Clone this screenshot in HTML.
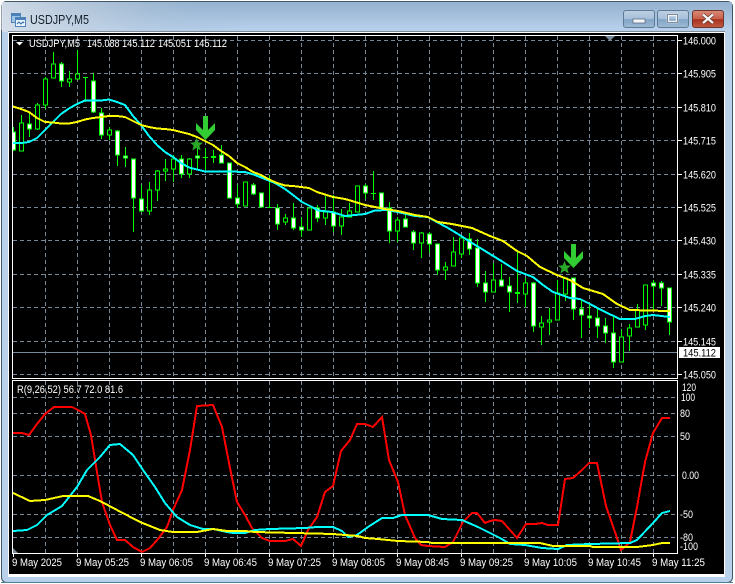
<!DOCTYPE html>
<html><head><meta charset="utf-8"><title>USDJPY,M5</title>
<style>
html,body{margin:0;padding:0;background:#fff;width:735px;height:584px;overflow:hidden}
svg{display:block}
text{font-family:"Liberation Sans",sans-serif;font-size:11px;fill:#fff}
</style></head><body>
<svg width="735" height="584" viewBox="0 0 735 584" xmlns="http://www.w3.org/2000/svg">
<defs>
<linearGradient id="t" x1="0" y1="0" x2="0" y2="1"><stop offset="0" stop-color="#94b1cf"/><stop offset="1" stop-color="#bad2ec"/></linearGradient>
<linearGradient id="g" x1="0" y1="0" x2="1" y2="0"><stop offset="0" stop-color="#dde3ea" stop-opacity=".8"/><stop offset=".14" stop-color="#c3d0de" stop-opacity=".5"/><stop offset=".33" stop-color="#94b1cf" stop-opacity="0"/></linearGradient>
<linearGradient id="b" x1="0" y1="0" x2="0" y2="1"><stop offset="0" stop-color="#bfd1e3"/><stop offset=".5" stop-color="#a5bfd9"/><stop offset=".52" stop-color="#83a5c6"/><stop offset="1" stop-color="#9dbad6"/></linearGradient>
<linearGradient id="c" x1="0" y1="0" x2="0" y2="1"><stop offset="0" stop-color="#d98a78"/><stop offset=".5" stop-color="#c75f4a"/><stop offset=".52" stop-color="#a8321d"/><stop offset="1" stop-color="#c05a42"/></linearGradient>
<clipPath id="mc"><rect x="13" y="36" width="664" height="342"/></clipPath>
<clipPath id="sc"><rect x="13" y="381" width="664" height="172"/></clipPath>
</defs>
<!-- window frame -->
<rect x="1.5" y="1.5" width="731" height="581" rx="5" fill="#b9d1eb" stroke="#3f5666"/>
<rect x="2" y="2" width="730" height="30" fill="url(#t)"/>
<rect x="2" y="2" width="730" height="30" fill="url(#g)"/>
<path d="M2 2V30" stroke="#e8eef4" stroke-width="1"/>
<rect x="8" y="31" width="717" height="1" fill="#7f8c98"/>
<rect x="8" y="32" width="717" height="545" fill="#fff"/>
<rect x="9" y="33" width="715" height="541" fill="#000"/>
<rect x="1" y="582" width="732" height="1" fill="#4f7f93"/>
<!-- title icon -->
<g shape-rendering="crispEdges">
<rect x="11.5" y="13.5" width="9" height="9" fill="#9fc3e6" stroke="#4c82b8"/>
<rect x="15.5" y="17.5" width="10" height="9" fill="#eaf3fb" stroke="#4c82b8"/>
<rect x="12" y="14" width="8" height="2" fill="#4c82b8"/>
<rect x="16" y="18" width="9" height="2" fill="#4c82b8"/>
</g>
<path d="M17 24l2-2 2 2 2-2 1 1" fill="none" stroke="#2f6aa5" stroke-width="1"/>
<text x="30" y="24" style="font-size:13px;fill:#15202a" textLength="59" lengthAdjust="spacingAndGlyphs">USDJPY,M5</text>
<!-- buttons -->
<rect x="623.5" y="10.5" width="31" height="17" rx="2.5" fill="url(#b)" stroke="#5f7a95"/>
<rect x="633" y="19" width="12" height="4" fill="#f4f6f8" stroke="#4f6074" stroke-width=".7"/>
<rect x="657.5" y="10.5" width="31" height="17" rx="2.5" fill="url(#b)" stroke="#5f7a95"/>
<rect x="668" y="15" width="9" height="7" fill="none" stroke="#f2f5f8" stroke-width="2.4"/>
<rect x="667.5" y="14.5" width="10" height="8" fill="none" stroke="#4d5f73" stroke-width=".7"/>
<rect x="692.5" y="10.5" width="31" height="17" rx="2.5" fill="url(#c)" stroke="#6e332a"/>
<path d="M703 14.5l10 8.5M713 14.5l-10 8.5" stroke="#5b3028" stroke-width="3.6"/>
<path d="M703 14.5l10 8.5M713 14.5l-10 8.5" stroke="#f4f4f4" stroke-width="2.4"/>

<!-- grid -->
<g stroke="#778899" stroke-width="1" stroke-dasharray="4 3" fill="none" shape-rendering="crispEdges">
<path d="M13 40.5H677M13 73.5H677M13 107.5H677M13 140.5H677M13 174.5H677M13 207.5H677M13 240.5H677M13 274.5H677M13 307.5H677M13 341.5H677M13 374.5H677"/>
<path d="M45.5 36V378M77.5 36V378M109.5 36V378M141.5 36V378M173.5 36V378M205.5 36V378M237.5 36V378M269.5 36V378M301.5 36V378M333.5 36V378M365.5 36V378M397.5 36V378M429.5 36V378M461.5 36V378M493.5 36V378M525.5 36V378M557.5 36V378M589.5 36V378M621.5 36V378M653.5 36V378"/>
<path d="M13 397.5H677M13 413.5H677M13 436.5H677M13 475.5H677M13 514.5H677M13 537.5H677"/>
<path d="M45.5 381V553M77.5 381V553M109.5 381V553M141.5 381V553M173.5 381V553M205.5 381V553M237.5 381V553M269.5 381V553M301.5 381V553M333.5 381V553M365.5 381V553M397.5 381V553M429.5 381V553M461.5 381V553M493.5 381V553M525.5 381V553M557.5 381V553M589.5 381V553M621.5 381V553M653.5 381V553"/>
</g>
<path d="M13 352.5H677" stroke="#778899" shape-rendering="crispEdges"/>

<!-- candles -->
<g clip-path="url(#mc)" shape-rendering="crispEdges" stroke="#00ff00" stroke-width="1">
<path fill="none" d="M13.5 127V151M21.5 115V151M29.5 112V137M37.5 103V130M45.5 77V109M53.5 52V78M61.5 62V87M69.5 71V87M77.5 50V79M85.5 77V102M93.5 73V113M101.5 108V139M109.5 127V140M117.5 130V166M125.5 147V167M133.5 159V232M141.5 185V212M149.5 182V215M157.5 170V201M165.5 159V181M173.5 155V182M181.5 155V178M189.5 158V178M197.5 145V169M205.5 148V170M213.5 150V163M221.5 145V163M229.5 163V198M237.5 185V208M245.5 182V206M253.5 183V195M261.5 193V207M269.5 175V207M277.5 204V230M285.5 214V225M293.5 203V230M301.5 217V237M309.5 208V230M317.5 205V222M325.5 196V225M333.5 195V232M341.5 209V235M349.5 203V217M357.5 186V212M365.5 184V199M373.5 171V200M381.5 193V208M389.5 202V243M397.5 217V242M405.5 213V227M413.5 230V250M421.5 232V258M429.5 232V253M437.5 244V275M445.5 262V280M453.5 237V266M461.5 237V258M469.5 233V255M477.5 239V287M485.5 271V302M493.5 263V292M501.5 264V287M509.5 277V312M517.5 250V303M525.5 278V307M533.5 282V332M541.5 316V345M549.5 308V335M557.5 280V320M565.5 278V301M573.5 278V320M581.5 300V338M589.5 305V328M597.5 308V338M605.5 318V343M613.5 317V368M621.5 329V362M629.5 324V351M637.5 304V327M645.5 285V330M653.5 280V310M661.5 281V306M669.5 288V335"/>
<path fill="none" d="M83 77.5h5M203 157.5h5M211 157.5h5M211 156.5h5M267 207.5h5M371 193.5h5M515 293.5h5M515 292.5h5"/>
<path fill="#fff" d="M11.5 132h4V150h-4zM27.5 124h4V129h-4zM59.5 64h4V81h-4zM91.5 81h4V112h-4zM99.5 113h4V135h-4zM115.5 131h4V155h-4zM123.5 156h4V158h-4zM131.5 159h4V198h-4zM139.5 199h4V211h-4zM179.5 159h4V174h-4zM195.5 156h4V158h-4zM219.5 155h4V163h-4zM227.5 163h4V198h-4zM235.5 198h4V204h-4zM251.5 185h4V194h-4zM259.5 193h4V207h-4zM275.5 208h4V224h-4zM291.5 218h4V228h-4zM299.5 227h4V230h-4zM315.5 208h4V218h-4zM331.5 212h4V226h-4zM363.5 186h4V193h-4zM379.5 193h4V208h-4zM387.5 208h4V231h-4zM403.5 219h4V227h-4zM411.5 232h4V243h-4zM427.5 234h4V244h-4zM435.5 244h4V270h-4zM467.5 239h4V249h-4zM475.5 248h4V283h-4zM483.5 283h4V292h-4zM499.5 280h4V286h-4zM507.5 286h4V292h-4zM531.5 283h4V326h-4zM571.5 278h4V309h-4zM579.5 309h4V315h-4zM587.5 316h4V318h-4zM595.5 318h4V326h-4zM603.5 326h4V333h-4zM611.5 333h4V362h-4zM651.5 283h4V286h-4zM659.5 283h4V288h-4zM667.5 288h4V322h-4z"/>
<path fill="#000" d="M19.5 123h4V151h-4zM35.5 105h4V129h-4zM43.5 79h4V105h-4zM51.5 64h4V78h-4zM67.5 79h4V82h-4zM75.5 74h4V79h-4zM107.5 130h4V135h-4zM147.5 190h4V211h-4zM155.5 171h4V190h-4zM163.5 169h4V171h-4zM171.5 159h4V169h-4zM187.5 159h4V174h-4zM243.5 182h4V206h-4zM283.5 218h4V222h-4zM307.5 208h4V230h-4zM323.5 212h4V218h-4zM339.5 217h4V226h-4zM347.5 211h4V217h-4zM355.5 186h4V212h-4zM395.5 220h4V231h-4zM419.5 233h4V243h-4zM443.5 267h4V270h-4zM451.5 252h4V266h-4zM459.5 238h4V254h-4zM491.5 280h4V292h-4zM523.5 283h4V294h-4zM539.5 323h4V327h-4zM547.5 320h4V322h-4zM555.5 293h4V320h-4zM563.5 278h4V294h-4zM619.5 337h4V362h-4zM627.5 328h4V336h-4zM635.5 310h4V327h-4zM643.5 285h4V325h-4z"/>
</g>

<!-- main MAs -->
<g fill="none" stroke-width="2" clip-path="url(#mc)" shape-rendering="crispEdges">
<polyline stroke="#00ffff" points="13,143 21,143 29,142 37,138 45,130 53,122 61,114 69,108.5 77,104 85,100.5 93,100.5 101,100.5 109,99.5 117,102 125,105 133,116 141,125 149,136 157,145 165,152 173,157 181,163 189,167.5 197,169.5 205,171.5 229,171.5 245,172 255,175 275,183 285,189 293,195 302,202 312,207 318,210.5 332,212 345,216 355,215 365,214 375,210.5 388,210 402,213 415,216 428,217 435,221 448,228 458,234 472,243 490,254 503,262 517,271 533,277 543,285 553,292 570,298 580,299 590,304 603,311 620,319 635,319 645,316 653,315 670,317"/>
<polyline stroke="#ffff00" points="13,106.5 21,109 29,112 37,118 45,122 53,122.5 61,123.5 69,123.5 77,122 85,119.5 93,118 101,117 109,116 117,116 125,117 133,121 141,125 149,127 157,128.5 165,129 173,130 181,132 189,134 197,137 205,141 213,145 221,151 229,156 237,163 245,167 253,172 261,175 269,179.5 277,183 285,185.5 293,186 301,187 309,188 317,192 325,194.5 333,197 345,199 352,201 365,205 385,209 398,211 415,215 428,217 438,222 452,224 472,228 490,236 503,241 517,251 527,256 540,267 557,275 570,280 583,288 603,294 617,304 630,310 667,311 670,311"/>
</g>

<!-- arrows and stars -->
<polygon fill="#32cd32" points="203,116 208,116 208,130 215,123 215,130 205.5,140 196,130 196,123 203,130"/>
<polygon fill="#2aa82a" points="196.5,138 198.3,142.4 203,142.6 199.4,145.6 200.7,150.5 196.5,147.8 192.3,150.5 193.6,145.6 190,142.6 194.7,142.4"/>
<polygon fill="#32cd32" points="571,244 576,244 576,258 583,251 583,258 573.5,268 564,258 564,251 571,258"/>
<polygon fill="#2aa82a" points="564.5,261 566.3,265.4 571,265.6 567.4,268.6 568.7,273.5 564.5,270.8 560.3,273.5 561.6,268.6 558,265.6 562.7,265.4"/>

<!-- sub lines -->
<g fill="none" stroke-width="2" clip-path="url(#sc)" shape-rendering="crispEdges">
<polyline stroke="#ff0000" points="13,433 22,433 29,435 37,424 45,414 54,407 72,407 78,410 85,414 91,435 97,472 102,502 110,525 117,540 125,540 133,547 142,552 150,548 158,539 167,527 173,510 182,490 190,450 197,406 213,405 222,427 230,468 237,502 245,515 252,528 262,538 270,541 285,541 293,539 301,546 308,530 317,517 325,492 333,486 341,451 350,440 357,424 365,424 373,427 382,417 389,460 398,482 405,515 415,538 421,545 428,546 445,547 453,542 463,522 472,513 477,513 485,523 490,521 495,520 502,521 510,530 517,538 526,524 535,524 542,523 548,525 558,525 565,479 573,478 582,470 589,463 597,463 606,506 617,538 621,550 630,542 637,507 645,462 653,433 662,418 670,418"/>
<polyline stroke="#00ffff" points="13,531 27,530 37,525 47,515 62,506 77,487 87,470 100,457 110,445 120,444 133,455 143,470 155,487 165,503 177,517 190,525 203,529 213,529 227,532 233,533 245,533 255,530 270,529 305,528 317,527 333,527 342,531 348,537 357,535 368,527 382,518 393,518 402,515 428,515 442,519 462,520 478,527 490,533 500,538 510,544 525,545 542,548 558,549 567,545 590,544 630,543 637,540 653,523 662,513 670,511"/>
<polyline stroke="#ffff00" points="13,493 30,501 45,500 63,496 88,496 100,501 117,510 140,522 160,530 173,532 197,532 213,529 227,531 245,531 255,532 333,534 345,535 358,536 365,538 378,539 398,541 428,542 432,543 540,543 553,546 590,546 593,547 637,547 653,545 662,543 670,543"/>
</g>

<!-- panel borders and ticks -->
<g fill="none" stroke="#fff" stroke-width="1" shape-rendering="crispEdges">
<rect x="12.5" y="35.5" width="665" height="343"/>
<rect x="12.5" y="380.5" width="665" height="173"/>
<path d="M678 40.5h4M678 73.5h4M678 107.5h4M678 140.5h4M678 174.5h4M678 207.5h4M678 240.5h4M678 274.5h4M678 307.5h4M678 341.5h4M678 374.5h4"/>
<path d="M13.5 554v3M77.5 554v3M141.5 554v3M205.5 554v3M269.5 554v3M333.5 554v3M397.5 554v3M461.5 554v3M525.5 554v3M589.5 554v3M653.5 554v3"/>
</g>
<polygon points="605,36 615,36 610,41" fill="#778899"/>
<polygon points="13,553 13,548 18,553" fill="#778899"/>
<polygon points="16,42 23,42 19.5,45.5" fill="#fff"/>

<!-- text: top -->
<text x="29" y="47" textLength="51" lengthAdjust="spacingAndGlyphs">USDJPY,M5</text>
<text x="87" y="47" textLength="32.5" lengthAdjust="spacingAndGlyphs">145.088</text>
<text x="122" y="47" textLength="33" lengthAdjust="spacingAndGlyphs">145.112</text>
<text x="158" y="47" textLength="33" lengthAdjust="spacingAndGlyphs">145.051</text>
<text x="194" y="47" textLength="33" lengthAdjust="spacingAndGlyphs">145.112</text>
<text x="17" y="393" textLength="106" lengthAdjust="spacingAndGlyphs">R(9,26,52) 56.7 72.0 81.6</text>

<!-- price axis -->
<text x="683" y="44.5" textLength="33" lengthAdjust="spacingAndGlyphs">146.000</text>
<text x="683" y="77.5" textLength="33" lengthAdjust="spacingAndGlyphs">145.905</text>
<text x="683" y="111.5" textLength="33" lengthAdjust="spacingAndGlyphs">145.810</text>
<text x="683" y="144.5" textLength="33" lengthAdjust="spacingAndGlyphs">145.715</text>
<text x="683" y="178.5" textLength="33" lengthAdjust="spacingAndGlyphs">145.620</text>
<text x="683" y="211.5" textLength="33" lengthAdjust="spacingAndGlyphs">145.525</text>
<text x="683" y="244.5" textLength="33" lengthAdjust="spacingAndGlyphs">145.430</text>
<text x="683" y="278.5" textLength="33" lengthAdjust="spacingAndGlyphs">145.335</text>
<text x="683" y="311.5" textLength="33" lengthAdjust="spacingAndGlyphs">145.240</text>
<text x="683" y="345.5" textLength="33" lengthAdjust="spacingAndGlyphs">145.145</text>
<text x="683" y="378.5" textLength="33" lengthAdjust="spacingAndGlyphs">145.050</text>
<rect x="679" y="347" width="41" height="11" fill="#fff"/>
<text x="683" y="356.5" style="fill:#000" textLength="33" lengthAdjust="spacingAndGlyphs">145.112</text>

<!-- sub axis -->
<text x="682" y="391" textLength="14" lengthAdjust="spacingAndGlyphs">120</text>
<text x="681" y="401" textLength="14" lengthAdjust="spacingAndGlyphs">100</text>
<text x="680" y="417" textLength="10" lengthAdjust="spacingAndGlyphs">80</text>
<text x="680" y="440" textLength="10" lengthAdjust="spacingAndGlyphs">50</text>
<text x="682" y="479" textLength="17" lengthAdjust="spacingAndGlyphs">0.00</text>
<text x="680" y="518" textLength="13" lengthAdjust="spacingAndGlyphs">-50</text>
<text x="680" y="541" textLength="13" lengthAdjust="spacingAndGlyphs">-80</text>
<text x="680" y="550" textLength="18" lengthAdjust="spacingAndGlyphs">-100</text>

<!-- time axis -->
<text x="12" y="566" textLength="50" lengthAdjust="spacingAndGlyphs">9 May 2025</text>
<text x="76" y="566" textLength="53" lengthAdjust="spacingAndGlyphs">9 May 05:25</text>
<text x="140" y="566" textLength="53" lengthAdjust="spacingAndGlyphs">9 May 06:05</text>
<text x="204" y="566" textLength="53" lengthAdjust="spacingAndGlyphs">9 May 06:45</text>
<text x="268" y="566" textLength="53" lengthAdjust="spacingAndGlyphs">9 May 07:25</text>
<text x="332" y="566" textLength="53" lengthAdjust="spacingAndGlyphs">9 May 08:05</text>
<text x="396" y="566" textLength="53" lengthAdjust="spacingAndGlyphs">9 May 08:45</text>
<text x="460" y="566" textLength="53" lengthAdjust="spacingAndGlyphs">9 May 09:25</text>
<text x="524" y="566" textLength="53" lengthAdjust="spacingAndGlyphs">9 May 10:05</text>
<text x="588" y="566" textLength="53" lengthAdjust="spacingAndGlyphs">9 May 10:45</text>
<text x="652" y="566" textLength="53" lengthAdjust="spacingAndGlyphs">9 May 11:25</text>
</svg>
</body></html>
